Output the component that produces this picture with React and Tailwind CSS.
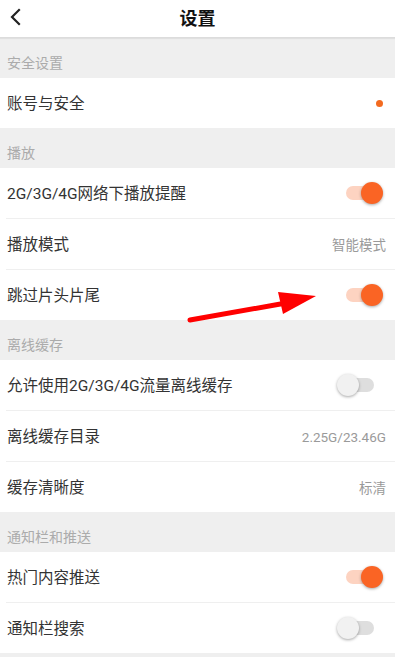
import React from "react";

const font = { fontFamily: '"Roboto", "Noto Sans CJK SC", sans-serif' };

function Toggle({ on }) {
  return (
    <div className="relative w-[46px] h-[24px] mr-[3px] flex items-center">
      <div
        className={`absolute left-[9px] right-[9px] h-[14px] rounded-full ${
          on ? "bg-[#fdd3c1]" : "bg-[#dedede]"
        }`}
      />
      <div
        className={`absolute w-[22px] h-[22px] rounded-full shadow-[0_1px_3px_rgba(0,0,0,0.35)] ${
          on ? "right-0 bg-[#fa6424]" : "left-0 bg-[#f1f1f1]"
        }`}
      />
    </div>
  );
}

function Section({ title }) {
  return (
    <div className="h-[40px] bg-[#efefef] flex items-end pb-[8px] pl-[7px] text-[14px] text-[#ababab] leading-none">
      {title}
    </div>
  );
}

function Row({ label, right, divider }) {
  return (
    <div className="bg-white">
      {divider && <div className="ml-[6px] h-px bg-[#efefef]" />}
      <div className="h-[50px] flex items-center justify-between pl-[7px] pr-[9px]">
        <span className="text-[15.5px] text-[#333] leading-none pt-[4px]">{label}</span>
        {right}
      </div>
    </div>
  );
}

function Value({ children }) {
  return <span className="text-[13.5px] text-[#9a9a9a] leading-none pt-[3px]">{children}</span>;
}

export default function App() {
  return (
    <div className="relative w-[395px] h-[657px] overflow-hidden bg-[#efefef]" style={font}>
      <div className="h-[38px] bg-white relative flex items-center justify-center border-b border-[#dcdcdc] shadow-[0_1px_1px_rgba(0,0,0,0.06)]">
        <svg className="absolute left-[9px] top-[8px]" width="14" height="18" viewBox="0 0 14 18">
          <path d="M10 2 L3 9 L10 16" fill="none" stroke="#222" strokeWidth="2.2" strokeLinecap="square" />
        </svg>
        <span className="text-[18px] font-bold text-[#111] leading-none">设置</span>
      </div>

      <Section title="安全设置" />
      <Row
        label="账号与安全"
        right={<div className="w-[7px] h-[7px] rounded-full bg-[#f36a1f] mr-[3px]" />}
      />

      <Section title="播放" />
      <Row label="2G/3G/4G网络下播放提醒" right={<Toggle on />} />
      <Row label="播放模式" divider right={<Value>智能模式</Value>} />
      <Row label="跳过片头片尾" divider right={<Toggle on />} />

      <Section title="离线缓存" />
      <Row label="允许使用2G/3G/4G流量离线缓存" right={<Toggle on={false} />} />
      <Row label="离线缓存目录" divider right={<Value>2.25G/23.46G</Value>} />
      <Row label="缓存清晰度" divider right={<Value>标清</Value>} />

      <Section title="通知栏和推送" />
      <Row label="热门内容推送" right={<Toggle on />} />
      <Row label="通知栏搜索" divider right={<Toggle on={false} />} />

      <svg className="absolute left-0 top-0 pointer-events-none" width="395" height="657" viewBox="0 0 395 657">
        <line x1="190" y1="320" x2="286" y2="303" stroke="#ff0000" strokeWidth="5" strokeLinecap="round" />
        <polygon points="278,292 316,296 283,314" fill="#ff0000" />
      </svg>
    </div>
  );
}
